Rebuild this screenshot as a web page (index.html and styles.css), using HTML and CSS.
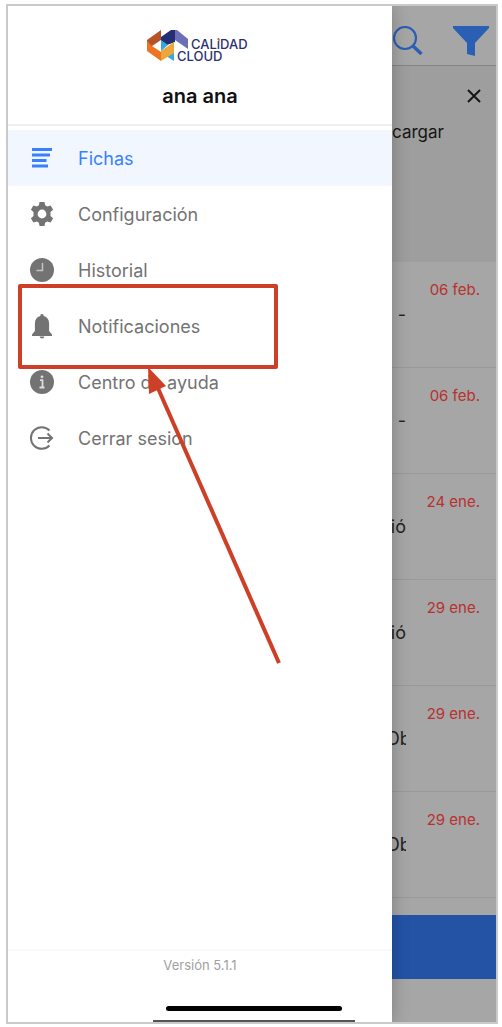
FILE: index.html
```html
<!DOCTYPE html>
<html lang="es">
<head>
<meta charset="utf-8">
<meta name="viewport" content="width=device-width, initial-scale=1">
<title>Calidad Cloud</title>
<link rel="stylesheet" href="styles.css">
</head>
<body>
<div class="phone">
  <aside class="drawer">
    <header class="drawer-head">
      <svg class="logo" width="106" height="36" viewBox="0 0 106 36" role="img" aria-label="Calidad Cloud">
        <path d="M0 12L14 2V12L5 18L0 22Z" fill="#b5532b"/>
        <path d="M0 13L5 18L14 24V33L0 23Z" fill="#ee7423"/>
        <path d="M26 2H30L41 11V21L28 12Z" fill="#6a6fb8"/>
        <path d="M14 9L24 2H28V14L20 17L14 13Z" fill="#232f72"/>
        <path d="M14 12L21 17L14 23Z" fill="#35a8e0"/>
        <path d="M19 28L27 23V33Z" fill="#35a8e0"/>
        <path d="M14 23L27 14V25L14 33Z" fill="#eea63a"/>
        <text class="logo-text" x="44" y="21">CALiDAD</text>
        <text class="logo-text" x="30" y="33">CLOUD</text>
        <circle cx="72" cy="12" r="1" fill="#ee7423"/>
      </svg>
      <h1 class="user">ana ana</h1>
    </header>
    <nav class="menu">
      <a class="item active" href="#">
        <svg class="icon" viewBox="0 0 24 24"><path d="M2 3.500H22M2 9H20M2 14.500H16.500M2 20H18" fill="none" stroke="currentColor" stroke-width="2.800"/></svg>
        Fichas</a>
      <a class="item" href="#">
        <svg class="icon" viewBox="0 0 24 24"><path fill="currentColor" fill-rule="evenodd" d="M9.500 0h5l.6 3.300 2.200 1.300 3.300-1.200 2.500 4.300-2.600 2.200v4.200l2.600 2.200-2.500 4.300-3.300-1.200-2.200 1.300-.6 3.300h-5l-.6-3.300-2.200-1.300-3.300 1.200-2.500-4.300 2.600-2.200V9.900L.9 7.700l2.500-4.300 3.300 1.200 2.200-1.300zM12 7.600a4.400 4.400 0 1 0 0 8.800 4.400 4.400 0 0 0 0-8.800z"/></svg>
        Configuración</a>
      <a class="item" href="#">
        <svg class="icon" viewBox="0 0 24 24"><circle cx="12" cy="12" r="12" fill="currentColor"/><path d="M12.500 5V12.500H6.500" fill="none" stroke="#c4c4c4" stroke-width="1.500"/></svg>
        Historial</a>
      <a class="item" href="#">
        <svg class="icon" viewBox="0 0 24 24"><path fill="currentColor" d="M12 0c1.200 0 1.700.8 1.700 2 3.600.9 5.400 3.700 5.400 7.500v7.500l2.900 3.500v1.500H2v-1.500L4.900 17V9.500c0-3.800 1.800-6.600 5.400-7.500 0-1.200.5-2 1.700-2zM9.600 22.500h4.800c-.3 1.200-1.200 2-2.400 2s-2.100-.8-2.400-2z"/></svg>
        Notificaciones</a>
      <a class="item" href="#">
        <svg class="icon" viewBox="0 0 24 24"><circle cx="12" cy="12" r="12" fill="currentColor"/><path d="M10 10.200H12.500V17M9.500 17.500H14.500" fill="none" stroke="#ddd" stroke-width="1.800"/><circle cx="12" cy="6.800" r="1.400" fill="#ddd"/></svg>
        Centro de ayuda</a>
      <a class="item" href="#">
        <svg class="icon" viewBox="0 0 24 24"><path d="M19.500 4.500A10.800 10.800 0 1 0 19.500 19.500M8 12H22M17.500 7.500L22 12L17.500 16.500" fill="none" stroke="currentColor" stroke-width="2"/></svg>
        Cerrar sesión</a>
    </nav>
    <footer class="drawer-foot">
      <p class="version">Versión 5.1.1</p>
      <div class="home-bar"></div>
      <div class="home-bar-edge"></div>
    </footer>
  </aside>
  <main class="page">
    <div class="toolbar">
      <button class="tool" aria-label="Buscar"><svg width="32" height="32" viewBox="0 0 32 32"><circle cx="12" cy="12" r="11" fill="none" stroke="currentColor" stroke-width="2.200"/><path d="M20 20L28.500 28" stroke="currentColor" stroke-width="3.500"/></svg></button>
      <button class="tool" aria-label="Filtrar"><svg width="36" height="32" viewBox="0 0 36 32"><path d="M0 0H36V2L22 17V30L14 28V17L0 2Z" fill="currentColor"/></svg></button>
    </div>
    <section class="notice">
      <button class="close" aria-label="Cerrar"><svg width="14" height="14" viewBox="0 0 14 14"><path d="M1 1L13 13M13 1L1 13" stroke="currentColor" stroke-width="2"/></svg></button>
      <p class="notice-text">cargar</p>
    </section>
    <ul class="list">
      <li class="row"><time class="date">06 feb.</time><span class="title">-</span></li>
      <li class="row"><time class="date">06 feb.</time><span class="title">-</span></li>
      <li class="row"><time class="date">24 ene.</time><span class="title">ió</span></li>
      <li class="row"><time class="date">29 ene.</time><span class="title">ió</span></li>
      <li class="row"><time class="date">29 ene.</time><span class="title cut">Ob</span></li>
      <li class="row"><time class="date">29 ene.</time><span class="title cut">Ob</span></li>
    </ul>
    <div class="action-bar"></div>
  </main>
  <svg class="callout" width="264" height="388" viewBox="0 0 264 388" aria-hidden="true">
    <rect x="2" y="2" width="256" height="81" fill="none" stroke="#cd4027" stroke-width="4" stroke-linejoin="round"/>
    <path d="M139 102L261 379" stroke="#cd4027" stroke-width="4"/>
    <path d="M130 83L131 110L148 102Z" fill="#cd4027"/>
  </svg>
</div>
</body>
</html>
```
FILE: styles.css
```css
* { box-sizing: border-box; }
body {
  margin: 0;
  padding: 4px 4px 3px 6px;
  background: #fff;
  font-family: Inter, "Liberation Sans", sans-serif;
}
h1, p, ul { margin: 0; padding: 0; }
button { border: 0; padding: 0; background: none; color: inherit; display: flex; }
.phone {
  position: relative;
  display: flex;
  min-height: calc(100vh - 7px);
  border: 2px solid #cacaca;
}
.drawer {
  position: relative;
  z-index: 1;
  flex: 0 1 384px;
  display: flex;
  flex-direction: column;
  background: #fff;
  clip-path: inset(0 -20px 0 0);
  box-shadow: 0 0 16px rgba(0, 0, 0, 0.25);
}
.drawer-head {
  display: flex;
  flex-direction: column;
  align-items: center;
  gap: 20px;
  height: 120px;
  padding-top: 22px;
  border-bottom: 2px solid #f0f0f0;
}
.logo-text { font: 500 13px Inter, sans-serif; fill: #2b2f70; }
.user { font-size: 20px; line-height: 24px; font-weight: 600; color: #111; }
.menu { padding-top: 4px; }
.item {
  display: flex;
  align-items: center;
  gap: 24px;
  height: 56px;
  padding-left: 22px;
  color: #737373;
  font-size: 18px;
  text-decoration: none;
}
.item.active { color: #3880ff; background: #f2f7ff; }
.icon { width: 24px; height: 24px; overflow: visible; }
.drawer-foot {
  display: flex;
  flex-direction: column;
  align-items: center;
  margin-top: auto;
  border-top: 2px solid #f9f9f9;
}
.version { padding: 6px 0; font-size: 13px; line-height: 16px; color: #a0a0a0; }
.home-bar { width: 176px; height: 5px; margin: 27px 0 9px 108px; border-radius: 3px; background: #000; }
.home-bar-edge { width: 202px; height: 2px; margin-left: 108px; background: #555; }
.page {
  flex: 1;
  min-width: 0;
  overflow: hidden;
  background: #a6a6a6;
}
.toolbar {
  display: flex;
  justify-content: space-between;
  height: 60px;
  padding: 20px 7px 0 1px;
  border-bottom: 1px solid #858585;
  color: #2b5fb3;
}
.notice { height: 196px; padding-top: 23px; background: #9e9e9e; color: #151515; }
.close { margin: 0 15px 0 auto; }
.notice-text { margin-top: 17px; font-size: 17px; line-height: 24px; }
.list { list-style: none; }
.row {
  display: flex;
  flex-direction: column;
  height: 106px;
  padding: 18px 16px 0 0;
  border-bottom: 1px solid #999;
}
.date { align-self: flex-end; font-size: 15px; line-height: 20px; color: #b93030; }
.title {
  display: flex;
  justify-content: flex-end;
  width: 14px;
  overflow: hidden;
  margin-top: 3px;
  font-size: 18px;
  line-height: 24px;
  color: #222;
}
.cut { display: block; text-indent: -6px; }
.action-bar { height: 64px; margin-top: 17px; background: #2453a6; }
.callout { position: absolute; z-index: 2; left: 10px; top: 278px; pointer-events: none; }
```
